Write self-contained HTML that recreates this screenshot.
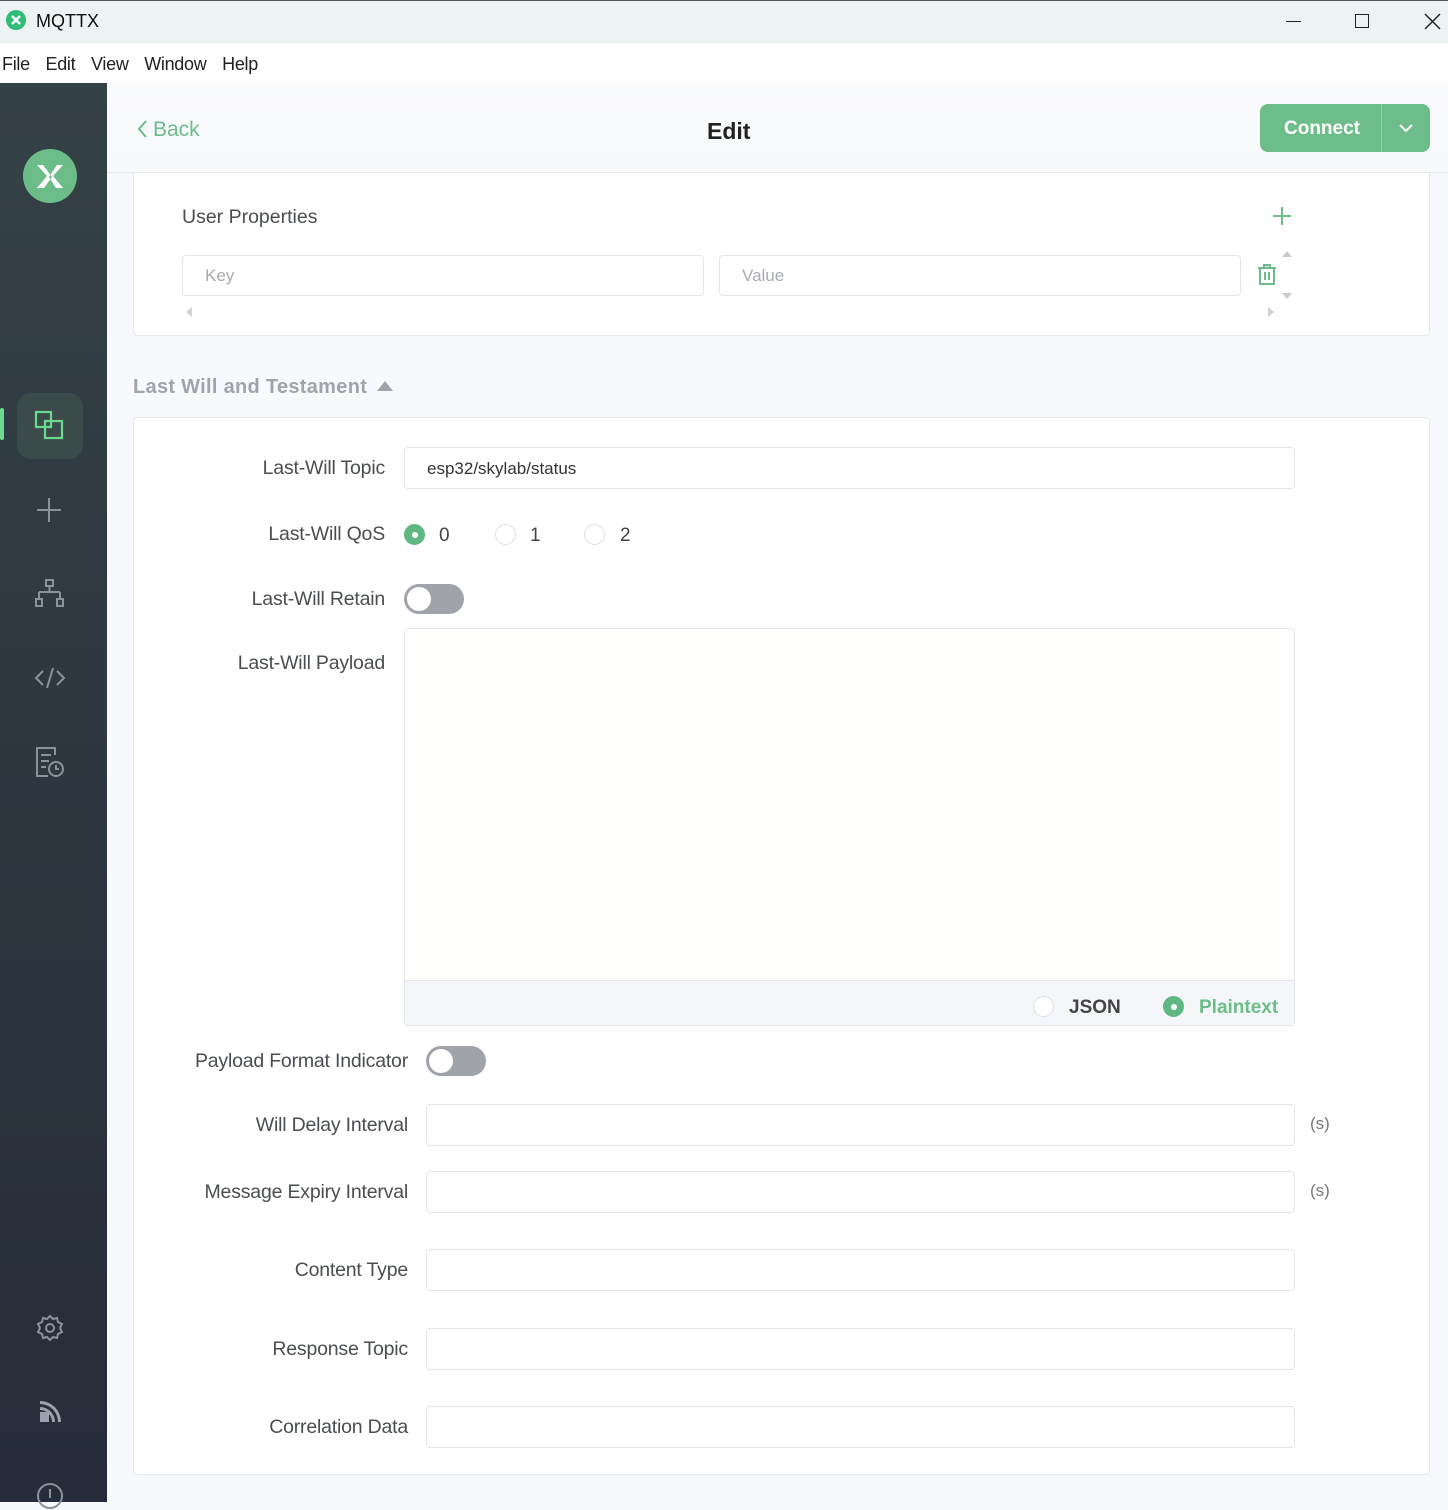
<!DOCTYPE html>
<html><head><meta charset="utf-8"><style>
*{box-sizing:border-box;margin:0;padding:0}
body{width:1448px;height:1502px;overflow:hidden;font-family:"Liberation Sans",sans-serif;background:#f8f9fc;position:relative;color:#444}
.a{position:absolute}
.lbl{position:absolute;text-align:right;font-size:19.5px;color:#4a4d52;white-space:nowrap;letter-spacing:-0.2px}
.inp{position:absolute;background:#fff;border:1px solid #e3e5e8;border-radius:4px}
.ph{position:absolute;font-size:17px;color:#a8abb2}
.radio{position:absolute;width:21px;height:21px;border-radius:50%;border:1px solid #dcdfe6;background:#fff}
.radio.on{background:#5fb883;border-color:#5fb883}
.radio.on::after{content:"";position:absolute;left:7px;top:7px;width:6px;height:6px;border-radius:50%;background:#fff}
.tog{position:absolute;width:60px;height:30px;border-radius:15px;background:#a0a3aa}
.tog::after{content:"";position:absolute;left:3px;top:3px;width:24px;height:24px;border-radius:50%;background:#fff}
.s{position:absolute;font-size:17px;color:#777}
</style></head><body>
<div class="a" style="left:0;top:0;width:1448px;height:43px;background:#edf3f3;border-top:1px solid #555"></div>
<div class="a" style="left:6px;top:10px;width:20px;height:20px;border-radius:50%;background:#2fbb78"></div>
<svg class="a" style="left:6px;top:10px" width="20" height="20"><path d="M6 6 L10 10 L6 14 M14 6 L10 10 L14 14" stroke="#fff" stroke-width="2.5" fill="none"/></svg>
<div class="a" style="left:36px;top:11px;font-size:18px;color:#111">MQTTX</div>
<div class="a" style="left:1286px;top:21px;width:15px;height:1px;background:#222"></div>
<div class="a" style="left:1355px;top:14px;width:14px;height:14px;border:1.5px solid #222"></div>
<svg class="a" style="left:1424px;top:13px" width="17" height="17"><path d="M1 1L16 16M16 1L1 16" stroke="#222" stroke-width="1.5"/></svg>
<div class="a" style="left:0;top:43px;width:1448px;height:40px;background:#fff"></div>
<div class="a" style="left:2px;top:54px;font-size:18px;color:#222;word-spacing:11px;letter-spacing:-0.3px">File Edit View Window Help</div>
<div class="a" style="left:0;top:83px;width:107px;height:1419px;background:linear-gradient(#344146,#262c39)"></div>
<div class="a" style="left:23px;top:149px;width:54px;height:54px;border-radius:50%;background:#6cbd8a"></div>
<svg class="a" style="left:23px;top:149px" width="54" height="54"><path d="M14 16 L24 27 L14 39 L21 39 L29 28 L20 16Z M40 16 L30 27 L40 39 L33 39 L26 28 L34 16Z" fill="#fff"/></svg>
<div class="a" style="left:0;top:408px;width:4px;height:32px;background:#6cd98f;border-radius:2px"></div>
<div class="a" style="left:17px;top:393px;width:66px;height:66px;border-radius:14px;background:#3a4b4a"></div>
<svg class="a" style="left:34px;top:410px" width="32" height="32" fill="none" stroke="#6cd98f" stroke-width="2.2"><rect x="2" y="2" width="15" height="15"/><rect x="11" y="11" width="17" height="17"/></svg>
<svg class="a" style="left:36px;top:497px" width="26" height="26" stroke="#8a929c" stroke-width="2"><path d="M13 1V25M1 13H25"/></svg>
<svg class="a" style="left:34px;top:578px" width="32" height="32" fill="none" stroke="#8a929c" stroke-width="2"><rect x="12" y="2" width="7" height="6"/><path d="M15.5 8V14M5 14H26M5 14V21M26 14V21"/><rect x="2" y="21" width="6" height="7"/><rect x="23" y="21" width="6" height="7"/></svg>
<svg class="a" style="left:34px;top:665px" width="32" height="26" fill="none" stroke="#8a929c" stroke-width="2"><path d="M9 6L2 13L9 20M23 6L30 13L23 20M19 3L13 23"/></svg>
<svg class="a" style="left:34px;top:745px" width="32" height="34" fill="none" stroke="#8a929c" stroke-width="2"><path d="M21 10V3H3V31H14M7 10H17M7 16H15M7 22H12"/><circle cx="22" cy="24" r="7"/><path d="M22 20V24H25"/></svg>
<svg class="a" style="left:36px;top:1314px" width="28" height="28" fill="none" stroke="#8a929c" stroke-width="2"><circle cx="14" cy="14" r="4"/><path d="M14 2L17 5L21 4L22 8L26 10L24 14L26 18L22 20L21 24L17 23L14 26L11 23L7 24L6 20L2 18L4 14L2 10L6 8L7 4L11 5Z"/></svg>
<svg class="a" style="left:38px;top:1400px" width="24" height="24"><path d="M2 12 L11 12 L11 22 L2 22Z M2 7 A15 15 0 0 1 17 22 L14 22 A12 12 0 0 0 2 10Z M2 1 A21 21 0 0 1 23 22 L20 22 A18 18 0 0 0 2 4Z" fill="#9aa2ad"/></svg>
<svg class="a" style="left:36px;top:1482px" width="28" height="28" fill="none" stroke="#8a929c" stroke-width="2"><circle cx="14" cy="14" r="12"/><path d="M14 7V16"/></svg>
<div class="a" style="left:107px;top:83px;width:1341px;height:90px;background:linear-gradient(#fafbfc,#f8f9fb);border-bottom:1px solid #e6e8eb"></div>
<svg class="a" style="left:136px;top:119px" width="12" height="20" fill="none" stroke="#6cbd8a" stroke-width="2"><path d="M10 2L3 10L10 18"/></svg>
<div class="a" style="left:153px;top:118px;font-size:21px;color:#6cbd8a">Back</div>
<div class="a" style="left:707px;top:118px;font-size:23px;font-weight:bold;color:#222">Edit</div>
<div class="a" style="left:1260px;top:104px;width:170px;height:48px;border-radius:8px;background:#6cbd8a"></div>
<div class="a" style="left:1381px;top:104px;width:1px;height:48px;background:#8fd0a8"></div>
<div class="a" style="left:1284px;top:118px;font-size:19px;font-weight:bold;color:#fff">Connect</div>
<svg class="a" style="left:1398px;top:122px" width="16" height="12" fill="none" stroke="#fff" stroke-width="2"><path d="M2 3L8 9L14 3"/></svg>
<div class="a" style="left:133px;top:173px;width:1297px;height:163px;background:#fff;border:1px solid #e6e8eb;border-top:none;border-radius:0 0 4px 4px"></div>
<div class="a" style="left:182px;top:206px;font-size:19.5px;color:#4a4d52">User Properties</div>
<svg class="a" style="left:1272px;top:206px" width="20" height="20" stroke="#6cbd8a" stroke-width="2"><path d="M10 1V19M1 10H19"/></svg>
<div class="inp" style="left:182px;top:255px;width:522px;height:41px"></div><div class="ph" style="left:205px;top:266px">Key</div>
<div class="inp" style="left:719px;top:255px;width:522px;height:41px"></div><div class="ph" style="left:742px;top:266px">Value</div>
<svg class="a" style="left:1257px;top:264px" width="20" height="22" fill="none" stroke="#6cbd8a" stroke-width="2"><path d="M1 4H19M7 4V1H13V4M3 4V20H17V4M8 8V16M12 8V16"/></svg>
<svg class="a" style="left:1280px;top:248px" width="14" height="10"><path d="M2 9L7 3L12 9Z" fill="#c8cacd"/></svg>
<svg class="a" style="left:1280px;top:292px" width="14" height="10"><path d="M2 1L7 7L12 1Z" fill="#c8cacd"/></svg>
<svg class="a" style="left:184px;top:306px" width="10" height="12"><path d="M8 1L2 6L8 11Z" fill="#d0d2d5"/></svg>
<svg class="a" style="left:1266px;top:306px" width="10" height="12"><path d="M2 1L8 6L2 11Z" fill="#d0d2d5"/></svg>
<div class="a" style="left:133px;top:376px;font-size:20px;font-weight:bold;color:#a0a3a8;letter-spacing:0.3px">Last Will and Testament</div>
<svg class="a" style="left:376px;top:379px" width="18" height="14"><path d="M1 12L9 2L17 12Z" fill="#a0a3a8"/></svg>
<div class="a" style="left:133px;top:417px;width:1297px;height:1058px;background:#fff;border:1px solid #e6e8eb;border-radius:4px"></div>
<div class="lbl" style="right:1063px;top:457px">Last-Will Topic</div>
<div class="inp" style="left:404px;top:447px;width:891px;height:42px"></div>
<div class="a" style="left:427px;top:459px;font-size:17px;color:#333">esp32/skylab/status</div>
<div class="lbl" style="right:1063px;top:523px">Last-Will QoS</div>
<div class="radio on" style="left:404px;top:524px"></div><div class="a" style="left:439px;top:525px;font-size:19px;color:#444">0</div>
<div class="radio" style="left:495px;top:524px"></div><div class="a" style="left:530px;top:525px;font-size:19px;color:#444">1</div>
<div class="radio" style="left:584px;top:524px"></div><div class="a" style="left:620px;top:525px;font-size:19px;color:#444">2</div>
<div class="lbl" style="right:1063px;top:588px">Last-Will Retain</div>
<div class="tog" style="left:404px;top:584px"></div>
<div class="lbl" style="right:1063px;top:652px">Last-Will Payload</div>
<div class="inp" style="left:404px;top:628px;width:891px;height:398px;background:#fefefc"></div>
<div class="a" style="left:405px;top:980px;width:889px;height:45px;background:#f5f6f9;border-top:1px solid #e6e8eb"></div>
<div class="radio" style="left:1033px;top:996px"></div><div class="a" style="left:1069px;top:997px;font-size:19px;font-weight:bold;color:#444">JSON</div>
<div class="radio on" style="left:1163px;top:996px"></div><div class="a" style="left:1199px;top:997px;font-size:19px;font-weight:bold;color:#6cbd8a">Plaintext</div>
<div class="lbl" style="right:1040px;top:1050px">Payload Format Indicator</div>
<div class="tog" style="left:426px;top:1046px"></div>
<div class="lbl" style="right:1040px;top:1114px">Will Delay Interval</div>
<div class="inp" style="left:426px;top:1104px;width:869px;height:42px"></div><div class="s" style="left:1310px;top:1114px">(s)</div>
<div class="lbl" style="right:1040px;top:1181px">Message Expiry Interval</div>
<div class="inp" style="left:426px;top:1171px;width:869px;height:42px"></div><div class="s" style="left:1310px;top:1181px">(s)</div>
<div class="lbl" style="right:1040px;top:1259px">Content Type</div>
<div class="inp" style="left:426px;top:1249px;width:869px;height:42px"></div>
<div class="lbl" style="right:1040px;top:1338px">Response Topic</div>
<div class="inp" style="left:426px;top:1328px;width:869px;height:42px"></div>
<div class="lbl" style="right:1040px;top:1416px">Correlation Data</div>
<div class="inp" style="left:426px;top:1406px;width:869px;height:42px"></div>
</body></html>
